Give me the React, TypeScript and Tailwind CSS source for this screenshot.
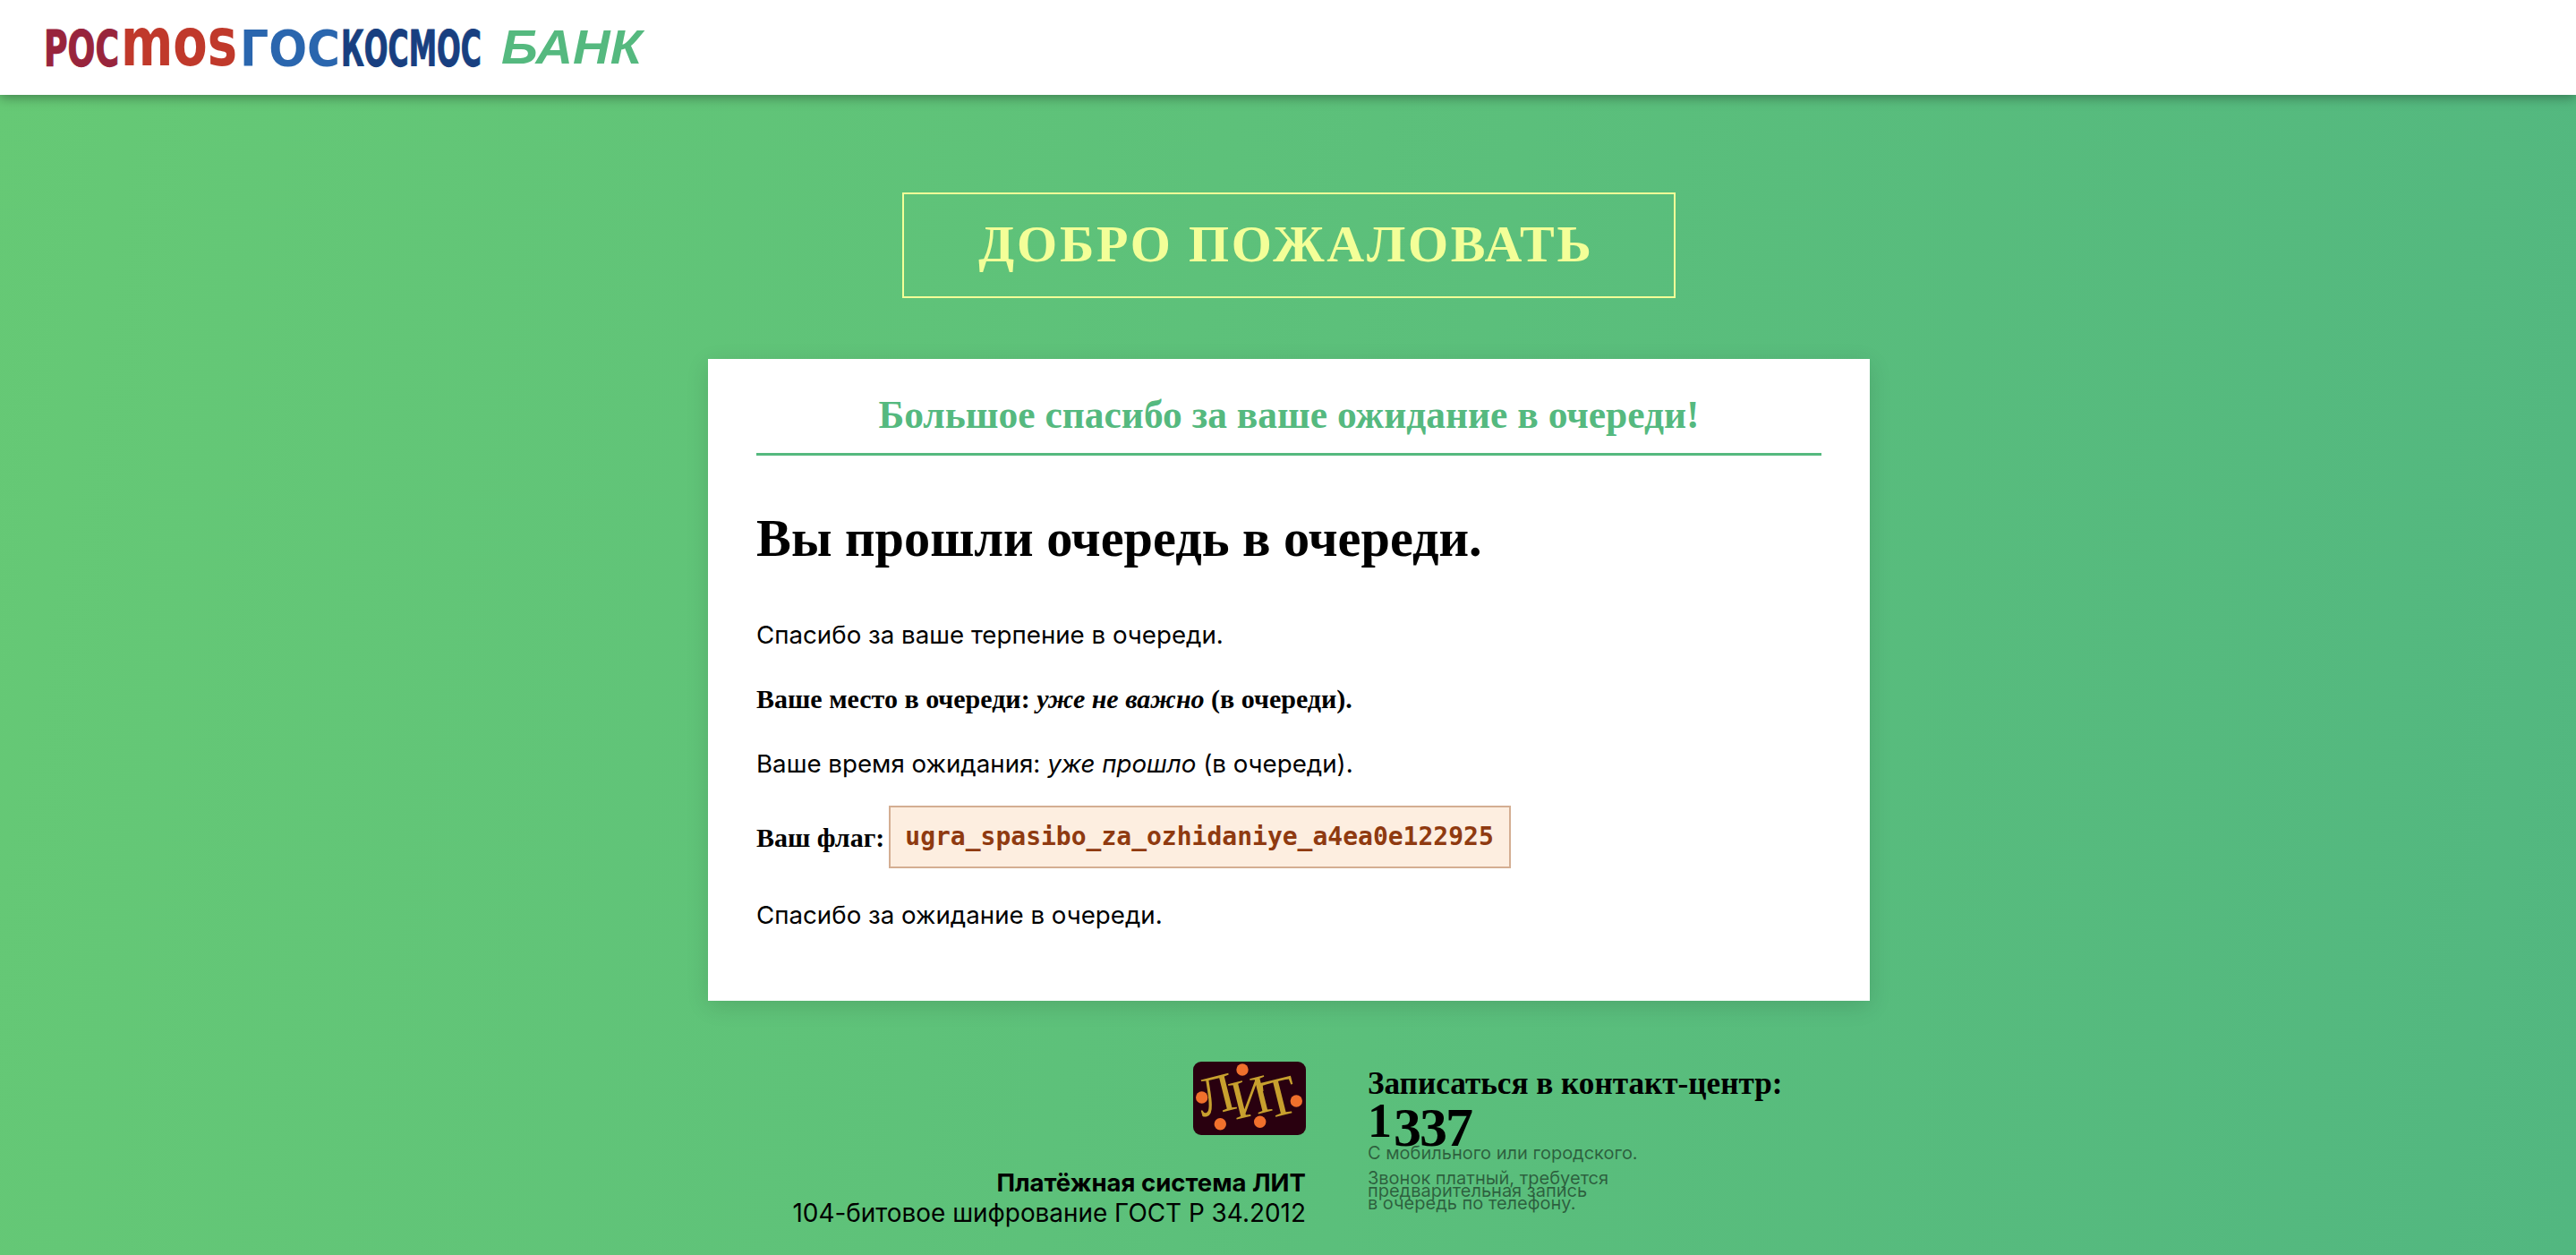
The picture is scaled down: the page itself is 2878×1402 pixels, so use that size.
const serif = 'font-["Liberation_Serif",serif]';

const Logo = () => (
	<svg width="680" height="48" viewBox="0 0 680 48" className="block">
		<g fontFamily="'DejaVu Sans', sans-serif" fontWeight="700" strokeWidth="1.2">
			<text x="0" y="44" fontSize="56" fill="#98243c" stroke="#98243c" textLength="84" lengthAdjust="spacingAndGlyphs">РОС</text>
			<text x="86" y="44" fontSize="75" fill="#c0392b" textLength="130" lengthAdjust="spacingAndGlyphs">mos</text>
			<text x="219" y="44" fontSize="56" fill="#2a66ae" textLength="112" lengthAdjust="spacingAndGlyphs">ГОС</text>
			<text x="332" y="44" fontSize="56" fill="#183f80" stroke="#183f80" textLength="157" lengthAdjust="spacingAndGlyphs">КОСМОС</text>
		</g>
		<text x="511" y="42" fontFamily="'Liberation Sans', sans-serif" fontWeight="700" fontStyle="italic" fontSize="53" fill="#55b97f" textLength="157" lengthAdjust="spacingAndGlyphs">БАНК</text>
	</svg>
);

const LitLogo = () => (
	<svg width="126" height="82" viewBox="0 0 126 82" className="block">
		<rect width="126" height="82" rx="9" fill="#29000f" />
		<text x="10 47 83" y="62 65 64" rotate="-14" fontFamily="'Liberation Serif', serif" fontSize="62" fill="#c8a02e">
			ЛИТ
		</text>
		<g fill="#f0702c">
			<circle cx="55" cy="9" r="6.7" />
			<circle cx="9.7" cy="40" r="6.7" />
			<circle cx="30.3" cy="69.7" r="6.7" />
			<circle cx="74.7" cy="67.3" r="6.7" />
			<circle cx="115.3" cy="44" r="6.7" />
		</g>
	</svg>
);

const App = () => {
	return (
		<div className='h-screen overflow-hidden bg-[linear-gradient(100deg,#66c975,#52b780)] font-["Inter",sans-serif] text-black'>
			<header className="relative flex h-[106px] items-center bg-white pl-[49px] shadow-[0_3px_12px_rgba(0,0,0,0.35)]">
				<Logo />
			</header>

			<main className="flex flex-col items-center pl-[2px]">
				<h1 className={`mt-[109px] flex h-[118px] w-[864px] items-center justify-center border-2 border-[#f3ff98] pr-[6px] pb-[3px] text-[58px] font-bold tracking-[2.75px] text-[#f3ff98] ${serif}`}>
					ДОБРО ПОЖАЛОВАТЬ
				</h1>

				<section className="mt-[68px] h-[717px] w-[1298px] bg-white px-[54px] shadow-[0_6px_24px_rgba(0,0,0,0.12)]">
					<h2 className={`flex h-[108px] items-end justify-center border-b-[3px] border-[#55b97f] pb-[18px] text-[43.5px] leading-[50px] font-bold text-[#55b97f] ${serif}`}>
						Большое спасибо за ваше ожидание в очереди!
					</h2>
					<h3 className={`mt-[60px] text-[58.3px] leading-[66px] font-bold ${serif}`}>
						Вы прошли очередь в очереди.
					</h3>
					<p className="mt-[56px] text-[27.7px] leading-[36px]">Спасибо за ваше терпение в очереди.</p>
					<p className={`mt-[36px] text-[30px] leading-[36px] font-bold ${serif}`}>
						Ваше место в очереди: <em>уже не важно</em> (в очереди).
					</p>
					<p className="mt-[36px] text-[27.7px] leading-[36px]">
						Ваше время ожидания: <em>уже прошло</em> (в очереди).
					</p>
					<p className={`mt-[29px] flex items-center gap-[5px] text-[30px] font-bold ${serif}`}>
						Ваш флаг:
						<code className='flex h-[70px] w-[695px] items-center border-2 border-[#d4ae92] bg-[#fdeee0] pl-[16px] font-["DejaVu_Sans_Mono",monospace] text-[28px] font-bold text-[#8f3a10]'>
							ugra_spasibo_za_ozhidaniye_a4ea0e122925
						</code>
					</p>
					<p className="mt-[34px] text-[27.7px] leading-[36px]">Спасибо за ожидание в очереди.</p>
				</section>

				<footer className="mt-[68px] mr-[3px] flex justify-center gap-[69px]">
					<div className="flex flex-col items-end">
						<LitLogo />
						<p className="mt-[36px] text-[27.5px] leading-[34px] font-bold">Платёжная система ЛИТ</p>
						<p className="text-[27.9px] leading-[34px]">104-битовое шифрование ГОСТ Р 34.2012</p>
					</div>
					<div className="pt-[3px]">
						<p className={`text-[35.2px] leading-[44px] font-bold ${serif}`}>Записаться в контакт-центр:</p>
						<p className={`h-[38px] text-[54px] leading-[38px] font-bold tracking-[2px] ${serif}`}>
							1<span className="align-[-10px] text-[62px] tracking-[-2px]">337</span>
						</p>
						<div className="mt-[10px] text-[20px] leading-[14px] text-black/50">
							<p>С мобильного или городского.</p>
							<p className="mt-[14px] w-[274px]">Звонок платный, требуется предварительная запись в{'\u00a0'}очередь по телефону.</p>
						</div>
					</div>
				</footer>
			</main>
		</div>
	);
};

export default App;
